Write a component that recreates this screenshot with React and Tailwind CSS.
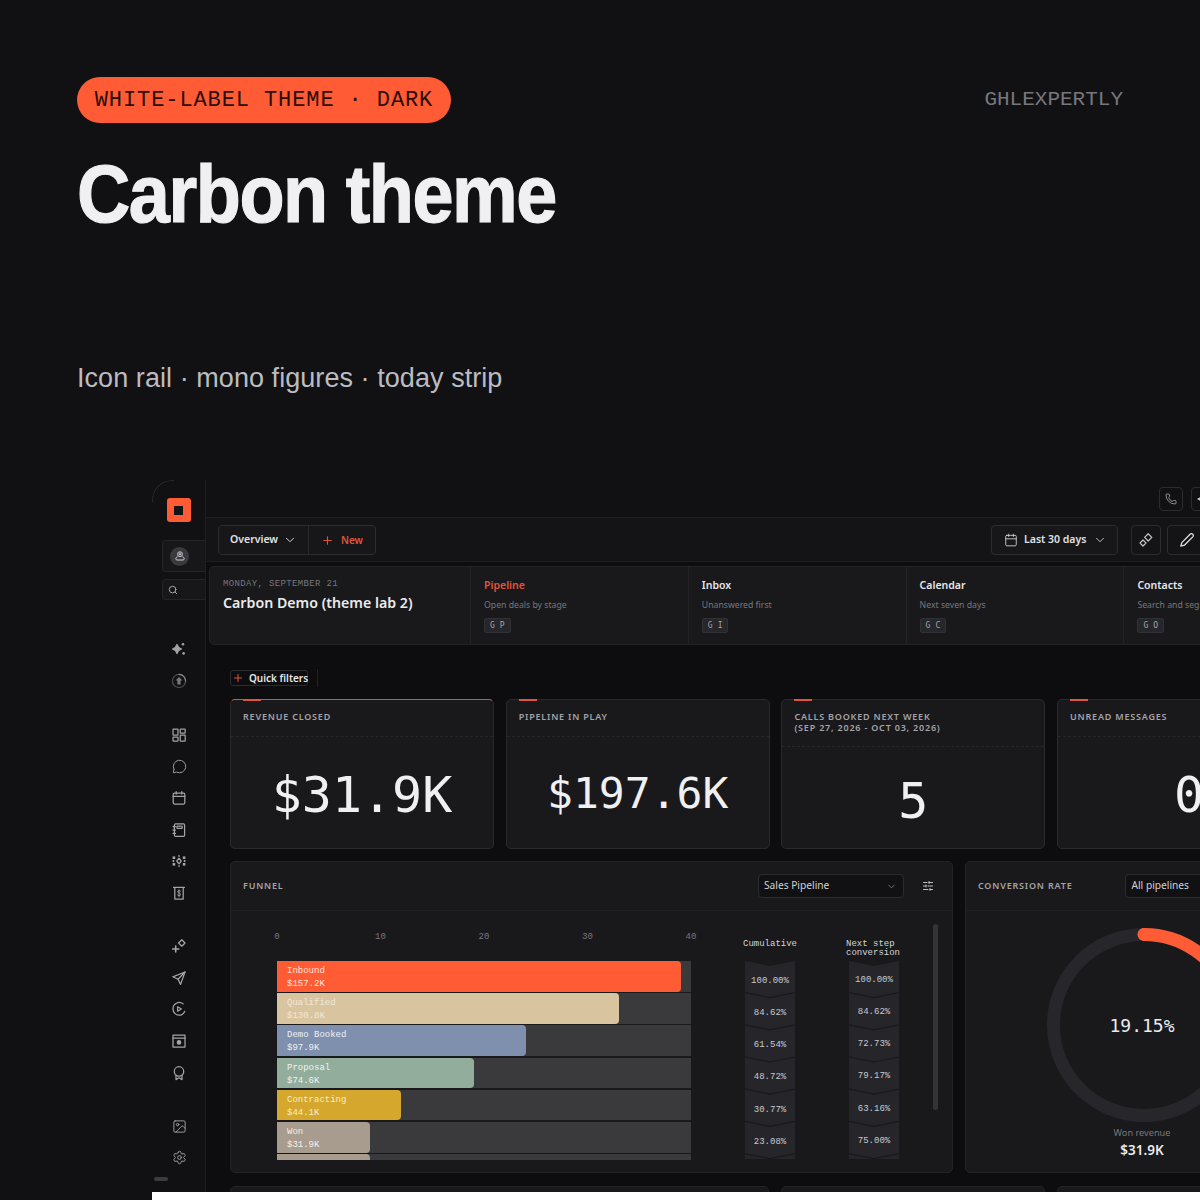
import React from "react";
import { MessageCircle, Calendar, Image, Settings, Phone, ChevronDown, Plus, Search, SlidersHorizontal } from "lucide-react";

const sans = "font-['Noto_Sans','Open_Sans',sans-serif]";
const mono = "font-['Liberation_Mono',monospace]";
const dmono = "font-['DejaVu_Sans_Mono',monospace]";

function Svg({ children, size = 16 }) {
  return (
    <svg width={size} height={size} viewBox="0 0 16 16" fill="none" stroke="currentColor" strokeWidth="1.25" strokeLinejoin="round" strokeLinecap="round">
      {children}
    </svg>
  );
}

const ISparkle = () => (
  <Svg><path d="M6 3.5 Q6.8 7 10.5 8 Q6.8 9 6 12.5 Q5.2 9 1.5 8 Q5.2 7 6 3.5Z" fill="currentColor" /><circle cx="12" cy="3.2" r="1.3" fill="currentColor" stroke="none" /><circle cx="12.6" cy="12.4" r="1.3" fill="currentColor" stroke="none" /></Svg>
);
const IUpload = () => (
  <Svg><circle cx="8" cy="8" r="6.6" stroke="#4a4a4e" /><path d="M8 1.4A6.6 6.6 0 0 1 14.6 8" stroke="#8a8a8e" /><path d="M8 4 L11.5 7.6 H9.6 V11.6 H6.4 V7.6 H4.5Z" fill="#77777c" stroke="none" /></Svg>
);
const IGrid = () => (
  <Svg><rect x="2" y="2" width="5" height="6" rx=".6" /><rect x="9.2" y="2" width="5" height="4" rx=".6" /><rect x="2" y="10" width="5" height="4.2" rx=".6" /><rect x="9.2" y="8" width="5" height="6.2" rx=".6" /></Svg>
);
const ICalendar = () => (
  <Svg><rect x="2.2" y="3" width="11.6" height="11" rx="1.2" /><path d="M2.2 6.4H13.8M5.2 1.6V4M10.8 1.6V4" /></Svg>
);
const INotebook = () => (
  <Svg><rect x="3.4" y="1.8" width="10.2" height="12.6" rx="1.2" /><rect x="6" y="4" width="5.2" height="2.4" rx=".4" /><path d="M2 4.6H4.4M2 8H4.4M2 11.4H4.4" /></Svg>
);
const INodes = () => (
  <Svg><path d="M8 5.2 L10.2 8 L8 10.8 L5.8 8Z" /><path d="M8 2.4V3.4M8 12.6V13.6" /><g fill="currentColor" stroke="none"><rect x="1.6" y="3.4" width="2.6" height="2.6" /><rect x="11.8" y="3.4" width="2.6" height="2.6" /><rect x="1.6" y="10" width="2.6" height="2.6" /><rect x="11.8" y="10" width="2.6" height="2.6" /><rect x="1.6" y="7" width="1.6" height="2" /><rect x="12.8" y="7" width="1.6" height="2" /></g></Svg>
);
const IReceipt = () => (
  <Svg><path d="M2.6 2.4H13.4M3.8 2.4V14H12.2V2.4" /><path d="M9.6 6.2C9.2 5.4 6.6 5.2 6.6 6.8C6.6 8.4 9.6 7.6 9.6 9.4C9.6 11 6.8 10.8 6.4 10M8 4.6V11.8" strokeWidth=".9" /></Svg>
);
const IPlusDiamond = () => (
  <Svg><path d="M10.8 1.8 L14 5 L10.8 8.2 L7.6 5Z" /><path d="M1.6 11H7.8M4.7 8V14" strokeWidth="1.6" /></Svg>
);
const ISend = () => (
  <Svg><path d="M14 2 L1.8 6.8 L7 9.2 L9.6 14.4Z" /><path d="M14 2 L7 9.2" /></Svg>
);
const IPlay = () => (
  <Svg><path d="M12 2.8A6.2 6.2 0 0 0 2 8A6.2 6.2 0 0 0 8 14.2A6.2 6.2 0 0 0 13.6 10.4" /><path d="M6.6 5.8 L10.4 8 L6.6 10.2Z" /></Svg>
);
const IWindow = () => (
  <Svg><rect x="2" y="2.2" width="12" height="11.8" /><path d="M2 5.2H14" /><circle cx="8" cy="9.4" r="2.3" fill="currentColor" stroke="none" /></Svg>
);
const IAward = () => (
  <Svg><circle cx="8" cy="6.4" r="4.7" /><path d="M5 10.2V14.6L8 12.8L11 14.6V10.2" /></Svg>
);
const IDiamonds = () => (
  <Svg><path d="M10.2 1.8 L13.8 5.4 L10.2 9 L6.6 5.4Z" /><path d="M5 8 L8 11 L5 14 L2 11Z" /></Svg>
);
const IPencil = () => (
  <Svg><path d="M11.6 1.8 Q13 1.4 14 2.4 Q14.8 3.6 14 4.6 L5.4 13.2 L1.8 14.2 L2.8 10.6Z" strokeWidth="1.3" /></Svg>
);
const IPerson = () => (
  <svg width="12" height="12" viewBox="0 0 12 12" fill="none" stroke="currentColor" strokeWidth="1"><circle cx="6" cy="4.2" r="2.4" /><circle cx="6" cy="4.2" r=".7" fill="currentColor" /><path d="M3.6 6.6 C1 7.8 1.6 10 3 10 H9 C10.4 10 11 7.8 8.4 6.6" /></svg>
);

function RailIcon({ Icon }) {
  return (
    <div className="h-[31.7px] pl-[1px] flex items-center justify-center text-[#a3a3a8]">
      <Icon />
    </div>
  );
}
const MsgIcon = () => <MessageCircle size={15} strokeWidth={1.5} />;
const ImgIcon = () => <Image size={15} strokeWidth={1.5} />;
const GearIcon = () => <Settings size={15} strokeWidth={1.5} />;

function Shortcut({ title, sub, keys, active }) {
  return (
    <div className="border-l border-[#232327] pl-[13px] pt-[10px]">
      <div className={`text-[10.5px] font-semibold leading-4 ${active ? "text-[#e0553a]" : "text-[#e6e6e8]"}`}>{title}</div>
      <div className="text-[8.7px] leading-4 text-[#77777c] mt-[4px] whitespace-nowrap">{sub}</div>
      <div className={`mt-[5px] w-fit h-[15px] px-[5px] flex items-center gap-[5px] rounded-[2px] bg-[#26262b] border border-[#303035] text-[8px] text-[#a5a5aa] ${dmono}`}>
        <span>G</span><span>{keys}</span>
      </div>
    </div>
  );
}

function Kpi({ label, value, highlight, sub, small, lower }) {
  return (
    <div className={`relative rounded-[5px] bg-[#19191c] border h-[150px] flex flex-col ${highlight ? "border-[#2a2a2e] border-t-[#d9523a]" : "border-[#2a2a2e]"}`}>
      <div className="absolute -top-px left-[12px] w-[18px] h-[2px] bg-[#e0553a]" />
      <div className={`px-[12px] border-b border-dashed border-[#26262a] text-[9px] font-semibold tracking-[0.8px] leading-[11px] text-[#a3a3a8] flex-none pt-[11px] ${sub ? "h-[47px]" : "h-[37px]"}`}>
        <div>{label}</div>
        {sub && <div>{sub}</div>}
      </div>
      <div className={`flex-1 flex items-center justify-center leading-none text-[#f0f0f2] ${small ? "text-[43px] pt-[2px]" : lower ? "text-[50px] pt-[6px]" : "text-[50px] pt-[4px]"} ${dmono}`}>{value}</div>
    </div>
  );
}

const bars = [
  ["Inbound", "$157.2K", 404, "#ff5c35", "#ffe4dc"],
  ["Qualified", "$130.8K", 342, "#d9c4a0", "#f1e7d6"],
  ["Demo Booked", "$97.9K", 249, "#7e90ad", "#eef1f6"],
  ["Proposal", "$74.6K", 197, "#92ad9b", "#eef3ef"],
  ["Contracting", "$44.1K", 124, "#d5a72c", "#f8ecc9"],
  ["Won", "$31.9K", 93, "#a89c8f", "#f3f0ec"],
  ["", "", 93, "#a89c8f", "#f3f0ec"],
];
const cum = ["100.00%", "84.62%", "61.54%", "48.72%", "30.77%", "23.08%", ""];
const next = ["100.00%", "84.62%", "72.73%", "79.17%", "63.16%", "75.00%", ""];

function Chevrons({ items, second }) {
  return (
    <div className="w-[50px] h-[198px] overflow-hidden">
      {items.map((v, i) => (
        <div key={i} className={`h-[36px] -mb-[3.8px] bg-[#26262a] flex items-center justify-center text-[9px] text-[#c8c8cc] [clip-path:polygon(0_0,50%_5px,100%_0,100%_calc(100%-5px),50%_100%,0_calc(100%-5px))] ${second ? "pt-[3px]" : "pt-[5px]"} ${mono}`}>{v}</div>
      ))}
    </div>
  );
}

export default function App() {
  return (
    <div className={`relative w-[1200px] h-[1200px] overflow-hidden bg-[#111114] ${sans}`}>
      <div className="px-[77px] pt-[77px] h-[480px]">
        <div className="flex items-center justify-between">
          <div className={`h-[46px] w-[374px] rounded-full bg-[#ff5c35] flex items-center justify-center text-[22px] tracking-[0.9px] text-[#2a0c05] ${mono}`}>WHITE-LABEL THEME · DARK</div>
          <div className={`text-[21px] text-[#77777c] ${mono}`}>GHLEXPERTLY</div>
        </div>
        <h1 className="mt-[28px] w-fit origin-left scale-x-[0.9] whitespace-nowrap text-[82px] leading-[86px] font-bold tracking-[-1.6px] text-[#f0f0f2] [-webkit-text-stroke:1.2px_#f0f0f2] font-['Liberation_Sans',sans-serif]">Carbon theme</h1>
        <p className="mt-[123px] text-[27px] leading-[36px] tracking-[0.06px] text-[#bcbcc0] font-['Liberation_Sans',sans-serif]">Icon rail · mono figures · today strip</p>
      </div>

      <div className="relative ml-[152px] h-[712px] flex bg-[#0d0d0f] rounded-tl-[20px] overflow-hidden">
        <div className="absolute top-0 left-0 w-[22px] h-[22px] rounded-tl-[20px] border-l border-t border-[#2a2a2e]" />
        <div className="relative w-[54px] flex-none bg-[#111113] border-r border-[#1e1e21] flex flex-col items-center pt-[18px]">
          <div className="absolute top-0 left-0 w-[22px] h-[22px] rounded-tl-[20px] border-l border-t border-[#2a2a2e]" />
          <div className="w-[24px] h-[24px] rounded-[3px] bg-[#ff5c35] flex items-center justify-center">
            <div className="w-[9px] h-[9px] bg-[#141416]" />
          </div>
          <div className="self-end w-[43px] h-[32px] mt-[18px] rounded-l-[4px] bg-[#17171a] border border-r-0 border-[#242428] flex items-center pl-[7px]">
            <div className="w-[19px] h-[19px] rounded-full bg-[#3a3a3e] flex items-center justify-center text-[#d0d0d4]"><IPerson /></div>
          </div>
          <div className="self-end w-[43px] h-[21px] mt-[7px] rounded-l-[4px] bg-[#17171a] border border-r-0 border-[#242428] flex items-center pl-[5px] text-[#b0b0b5]"><Search size={10} strokeWidth={2.2} /></div>
          <div className="mt-[33px] w-full">
            <RailIcon Icon={ISparkle} />
            <RailIcon Icon={IUpload} />
          </div>
          <div className="mt-[22.5px] w-full">
            {[IGrid, MsgIcon, ICalendar, INotebook, INodes, IReceipt].map((I, i) => <RailIcon key={i} Icon={I} />)}
          </div>
          <div className="mt-[21px] w-full">
            {[IPlusDiamond, ISend, IPlay, IWindow, IAward].map((I, i) => <RailIcon key={i} Icon={I} />)}
          </div>
          <div className="mt-[22px] w-full">
            {[ImgIcon, GearIcon].map((I, i) => <RailIcon key={i} Icon={I} />)}
          </div>
          <div className="absolute left-[2px] bottom-[11px] w-[14px] h-[4px] rounded-full bg-[#3c3c40]" />
        </div>

        <div className="flex-1 min-w-0 overflow-hidden">
          <div className="h-[38px] bg-[#111113] border-b border-[#1e1e21] flex items-center justify-end gap-[8px] pr-0 w-[994px]">
            <div className="w-[24px] h-[24px] rounded-[4px] border border-[#2c2c30] flex items-center justify-center text-[#b8b8bc]"><Phone size={12} strokeWidth={1.5} /></div>
            <div className="w-[24px] h-[24px] -mr-[15px] rounded-[4px] border border-[#2c2c30] flex items-center pl-[4px] text-[#c8c8cc]">
              <svg width="8" height="8" viewBox="0 0 8 8" fill="currentColor"><path d="M1 4 L7 0.5 V7.5Z" /></svg>
            </div>
          </div>
          <div className="h-[44px] w-[994px] bg-[#141416] border-b border-[#1e1e21] flex items-center pl-[12px]">
            <div className="h-[30px] flex items-center rounded-[4px] border border-[#2c2c30] bg-[#17171a] text-[10.5px] font-semibold">
              <div className="w-[90px] h-full flex items-center gap-[5px] pl-[11px] pt-[1px] text-[#e0e0e2] border-r border-[#2c2c30]">Overview <ChevronDown size={14} strokeWidth={1.6} /></div>
              <div className="w-[66px] h-full flex items-center gap-[7px] pl-[12px] pt-[1px] text-[10px] text-[#e0553a]"><Plus size={13} /><span>New</span></div>
            </div>
            <div className="ml-auto -mr-[1px] flex items-center">
              <div className="w-[127px] h-[30px] rounded-[4px] border border-[#2c2c30] bg-[#17171a] flex items-center gap-[6px] pl-[12px] pt-[1px] text-[10.5px] font-semibold text-[#e0e0e2]"><Calendar size={14} strokeWidth={1.4} /><span>Last 30 days</span><ChevronDown size={14} strokeWidth={1.4} className="ml-[1px]" /></div>
              <div className="ml-[13px] w-[30px] h-[30px] rounded-[4px] border border-[#2c2c30] flex items-center justify-center text-[#c0c0c4]"><IDiamonds /></div>
              <div className="ml-[6px] w-[39px] -mr-[5px] h-[30px] rounded-[4px] border border-[#2c2c30] flex items-center justify-center text-[#e0e0e2]"><IPencil /></div>
            </div>
          </div>

          <div className="ml-[3px] mt-[4px] w-[1150px] h-[79px] rounded-[5px] border border-[#232327] bg-[#19191c] grid grid-cols-[260px_217.8px_217.8px_217.8px_218px]">
            <div className="pl-[13px] pt-[10px]">
              <div className={`text-[9px] tracking-[0.35px] leading-[14px] text-[#77777c] ${mono}`}>MONDAY, SEPTEMBER 21</div>
              <div className="mt-[2px] text-[14.2px] leading-[20px] font-semibold text-[#ebebed]">Carbon Demo (theme lab 2)</div>
            </div>
            <Shortcut title="Pipeline" sub="Open deals by stage" keys="P" active />
            <Shortcut title="Inbox" sub="Unanswered first" keys="I" />
            <Shortcut title="Calendar" sub="Next seven days" keys="C" />
            <Shortcut title="Contacts" sub="Search and segment" keys="O" />
          </div>

          <div className="pl-[24px] w-[1140px]">
            <div className="mt-[23px] h-[20px] flex items-center">
              <div className="h-[16px] w-[78px] rounded-[3px] border border-[#2c2c30] flex items-center gap-[5px] pl-[1px] text-[10px] font-semibold text-[#e6e6e8] whitespace-nowrap"><Plus size={12} className="text-[#e0553a] flex-none" />Quick filters</div>
              <div className="ml-[9px] w-px h-[18px] bg-[#222226]" />
            </div>

            <div className="mt-[11px] grid grid-cols-[repeat(4,264px)] gap-x-[11.7px]">
              <Kpi label="REVENUE CLOSED" value="$31.9K" highlight />
              <Kpi label="PIPELINE IN PLAY" value="$197.6K" small />
              <Kpi label="CALLS BOOKED NEXT WEEK" sub="(SEP 27, 2026 - OCT 03, 2026)" value="5" lower />
              <Kpi label="UNREAD MESSAGES" value="0" />
            </div>

            <div className="mt-[12px] flex gap-[12px] items-start">
              <div className="w-[723px] h-[312px] flex-none rounded-[5px] bg-[#19191c] border border-[#232327]">
                <div className="h-[49px] border-b border-[#1f1f23] flex items-center pl-[12px] pr-[18px]">
                  <div className="text-[9px] font-semibold tracking-[0.8px] text-[#a3a3a8]">FUNNEL</div>
                  <div className="ml-auto w-[146px] h-[24px] rounded-[4px] border border-[#2c2c30] bg-[#111113] flex items-center justify-between pl-[5px] pr-[6px] text-[10.2px] text-[#d0d0d4]">Sales Pipeline <ChevronDown size={11} className="text-[#77777c]" /></div>
                  <SlidersHorizontal size={12} className="ml-[18px] text-[#c0c0c4]" />
                </div>
                <div className="flex pl-[46px] pt-[13px]">
                  <div className="w-[414px] flex-none">
                    <div className="relative h-[37px]">
                      {[[0, "0"], [103.5, "10"], [207, "20"], [310.5, "30"], [414, "40"]].map(([x, t]) => (
                        <span key={t} style={{ left: x }} className={`absolute -translate-x-1/2 top-[1px] text-[9px] text-[#77777c] leading-[24px] ${mono}`}>{t}</span>
                      ))}
                    </div>
                    <div className="h-[199px] overflow-hidden flex flex-col gap-[1.6px]">
                      {bars.map(([n, v, w, c, tc], i) => (
                        <div key={i} className="h-[30.6px] flex-none bg-[#3a3a3d]">
                          <div style={{ width: w, background: c, color: tc }} className={`h-full rounded-r-[4px] pl-[10px] pt-[4px] text-[9px] leading-[13px] ${mono}`}>
                            <div>{n}</div><div>{v}</div>
                          </div>
                        </div>
                      ))}
                    </div>
                  </div>
                  <div className="ml-[54px] w-[50px] flex-none">
                    <div className={`h-[37px] pt-[16px] text-[9px] leading-[9px] text-center text-[#d4d4d8] whitespace-nowrap -mx-[3px] ${mono}`}>Cumulative</div>
                    <Chevrons items={cum} />
                  </div>
                  <div className="ml-[54px] w-[50px] flex-none">
                    <div className={`h-[37px] pt-[16px] text-[9px] leading-[9px] text-[#d4d4d8] whitespace-nowrap -mr-[2px] -ml-[3px] ${mono}`}>Next step<br />conversion</div>
                    <Chevrons items={next} second />
                  </div>
                  <div className="ml-[34px] w-[5px] h-[186px] rounded-full bg-[#333338] flex-none" />
                </div>
              </div>

              <div className="w-[357px] h-[312px] flex-none rounded-[5px] bg-[#19191c] border border-[#232327]">
                <div className="h-[49px] border-b border-[#1f1f23] flex items-center pl-[12px]">
                  <div className="text-[9px] font-semibold tracking-[0.8px] text-[#a3a3a8] whitespace-nowrap">CONVERSION RATE</div>
                  <div className="ml-[53px] w-[146px] h-[24px] rounded-[4px] border border-[#2c2c30] bg-[#111113] flex items-center pl-[5px] text-[10.2px] text-[#d0d0d4]">All pipelines</div>
                </div>
                <div className="relative mx-auto mt-[17px] w-[194px] h-[194px]">
                  <svg viewBox="0 0 194 194" className="w-full h-full">
                    <circle cx="97" cy="97" r="90.5" fill="none" stroke="#27272b" strokeWidth="13" />
                    <circle cx="97" cy="97" r="90.5" fill="none" stroke="#ff5c35" strokeWidth="13" strokeLinecap="round" pathLength="100" strokeDasharray="19.15 80.85" transform="rotate(-90 97 97)" />
                  </svg>
                  <div className={`absolute inset-0 flex items-center justify-center pr-[3px] text-[18px] text-[#ebebed] ${dmono}`}>19.15%</div>
                </div>
                <div className="mt-[4px] pr-[3px] text-center text-[9.2px] leading-[14px] text-[#77777c]">Won revenue</div>
                <div className="pr-[3px] text-center text-[13.5px] leading-[20px] font-semibold text-[#ebebed]">$31.9K</div>
              </div>
            </div>

            <div className="mt-[13px] grid grid-cols-[539px_264px_264px] gap-x-[12px]">
              <div className="h-[40px] rounded-t-[5px] bg-[#19191c] border border-[#232327]" />
              <div className="h-[40px] rounded-t-[5px] bg-[#19191c] border border-[#232327]" />
              <div className="h-[40px] rounded-t-[5px] bg-[#19191c] border border-[#232327]" />
            </div>
          </div>
        </div>
      </div>
      <div className="ml-[152px] h-[8px] bg-white" />
    </div>
  );
}
